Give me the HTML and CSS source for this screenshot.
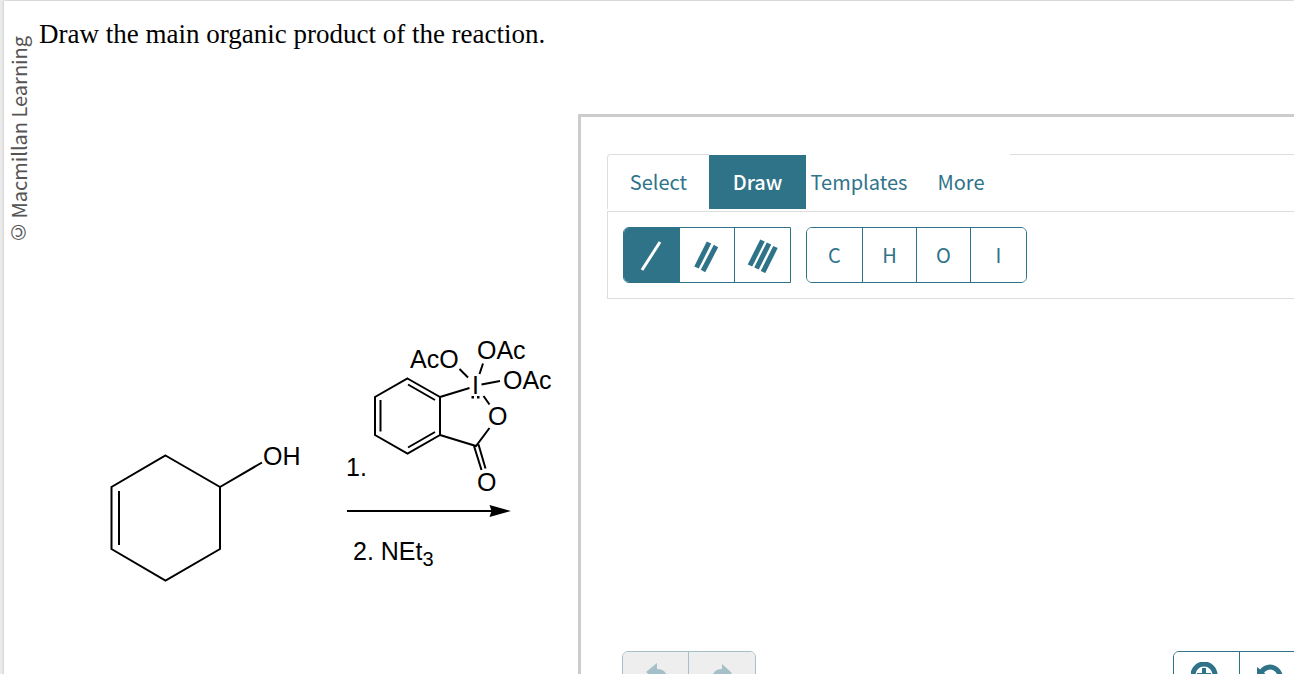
FILE: index.html
```html
<!DOCTYPE html>
<html lang="en">
<head>
<meta charset="utf-8">
<title>Draw the main organic product</title>
<link rel="stylesheet" href="styles.css">
</head>
<body>
<main class="page">
  <aside class="credit">© Macmillan Learning</aside>
  <div class="content">
    <p class="question">Draw the main organic product of the reaction.</p>
    <div class="workspace">
      <figure class="scheme">
        <svg class="reaction" width="480" height="260" viewBox="90 330 480 260" role="img" aria-label="Reaction scheme">
          <g class="bonds">
            <path d="M165.500 455.500 220 487V549L165.500 580.500 111.500 549V487ZM119 491V545M220 487 262 462.500"/>
            <path d="M407.500 378.500 440 397V435L407.500 453.500 375 435V397ZM380.500 400V431.500M408 384.500 435 400M408 447.500 435 432"/>
            <path d="M440 397 469.500 388M440 435 476 446 489.500 428M483.500 396 489.500 404.500M474 446 481.500 470M478.500 444.500 485.500 468.500M459.500 369 468 377.500M483 363.500 479.500 374M481.500 384.500 500 381"/>
            <path d="M347 511H493"/>
          </g>
          <path d="M489.500 505 511 511 489.500 517 491.500 511Z"/>
          <path d="M471.500 396h2.500v2.500h-2.500zM477 396h2.500v2.500h-2.500z"/>
          <g class="atoms">
            <text x="263" y="465">OH</text>
            <text x="410" y="368">AcO</text>
            <text x="477" y="359">OAc</text>
            <text x="503" y="389">OAc</text>
            <text x="472" y="394">I</text>
            <text x="488" y="425">O</text>
            <text x="477" y="491">O</text>
            <text x="346" y="476">1.</text>
            <text x="353" y="560">2. NEt<tspan class="sub" dy="6">3</tspan></text>
          </g>
        </svg>
      </figure>
      <section class="editor" aria-label="Structure editor">
        <nav class="tabs">
          <button class="tab tab-first" type="button">Select</button>
          <button class="tab tab-active" type="button">Draw</button>
          <button class="tab tab-wide" type="button">Templates</button>
          <button class="tab tab-more" type="button">More</button>
          <span class="tabs-rest"></span>
        </nav>
        <div class="toolbar">
          <div class="group bonds-group">
            <button class="tool selected" type="button" aria-label="Single bond"><svg width="32" height="36"><path class="thin" d="M6 33 24 5"/></svg></button>
            <button class="tool" type="button" aria-label="Double bond"><svg width="32" height="36"><path class="thick" d="M5.500 30.500 18 5.500M12 34 25 9"/></svg></button>
            <button class="tool" type="button" aria-label="Triple bond"><svg width="32" height="36"><path class="thick" d="M3 28.500 15.500 3.500M9.500 31.500 22 6.500M16 35 28.500 10"/></svg></button>
          </div>
          <div class="group">
            <button class="tool" type="button">C</button>
            <button class="tool" type="button">H</button>
            <button class="tool" type="button">O</button>
            <button class="tool" type="button">I</button>
          </div>
        </div>
        <div class="canvas"></div>
        <div class="actions">
          <div class="group action-group">
            <button class="tool" type="button" disabled aria-label="Undo"><svg width="28" height="28"><path d="M4 10 15 1V7C22 7 26 11 25 20 23 15 20 14 15 14V19Z"/></svg></button>
            <button class="tool" type="button" disabled aria-label="Redo"><svg width="28" height="28"><path d="M24 11 14 2V7C7 7 3 12 4 20 5 16 8 14 14 14V19Z"/></svg></button>
          </div>
          <div class="group action-group">
            <button class="tool" type="button" aria-label="Zoom in"><svg width="32" height="32"><circle class="ring" cx="13" cy="13" r="11"/><path class="plus" d="M13 6V20M6 13H20"/><path class="ring" d="M21 21 29 29"/></svg></button>
            <button class="tool" type="button" aria-label="Reset zoom"><svg width="32" height="32"><path d="M0 5 4 8 14 17H0Z"/><path class="ring" d="M4 11A10 10 0 1 1 7 23"/></svg></button>
            <button class="tool" type="button" aria-label="Zoom out"><svg width="32" height="32"><circle class="ring" cx="13" cy="13" r="11"/><path class="plus" d="M6 13H20"/><path class="ring" d="M21 21 29 29"/></svg></button>
          </div>
        </div>
      </section>
    </div>
  </div>
</main>
</body>
</html>
```
FILE: styles.css
```css
* { box-sizing: border-box; }
body {
  margin: 0;
  height: 100vh;
  overflow: hidden;
  background: #ebebeb;
  padding: 1px 0 0 4px;
  font-family: "Noto Sans CJK SC", "Open Sans", sans-serif;
}
.page {
  display: flex;
  min-height: 100%;
  background: #fff;
  box-shadow: 0 0 3px #bbb;
}
.credit {
  width: 30px;
  height: 242px;
  margin-right: 2px;
  writing-mode: vertical-rl;
  transform: rotate(180deg);
  font-size: 20px;
  line-height: 30px;
  color: #555;
}
.content { flex: 1; min-width: 0; padding-left: 3px; }
.question {
  margin: 0;
  padding-top: 17px;
  font: 27px/32px "Liberation Serif", serif;
  color: #000;
}
.workspace { display: flex; padding-top: 64px; }
.scheme { flex: none; width: 539px; margin: 0; padding: 216px 0 0 51px; }
.reaction { display: block; }
.bonds { fill: none; stroke: #000; stroke-width: 2; }
.atoms { font: 25px "Liberation Sans", sans-serif; }
.sub { font-size: 20px; }
.editor {
  flex: 1 0 auto;
  margin-right: -82px;
  border: 3px solid #ccc;
  padding: 37px 0 0 26px;
}
.tabs { display: flex; height: 57px; padding-bottom: 2px; }
.tab {
  padding: 0;
  border: 0;
  background: none;
  font: 20px/28px "Noto Sans CJK SC", sans-serif;
  color: #2f7389;
}
.tab-first {
  width: 102px;
  border: solid #ddd;
  border-width: 1px 0 0 1px;
  border-radius: 4px 0 0;
}
.tab-active {
  width: 97px;
  margin-top: 1px;
  background: #2f7389;
  color: #fff;
  font-weight: 500;
}
.tab-wide { width: 106px; }
.tab-more { width: 98px; }
.tabs-rest { flex: 1; border-top: 1px solid #ddd; }
.toolbar {
  display: flex;
  gap: 15px;
  padding: 15px;
  border: 1px solid #ddd;
}
.group {
  display: flex;
  border: 1px solid #2f7389;
  border-radius: 6px;
  overflow: hidden;
}
.bonds-group { border-radius: 6px 0 0 6px; }
.tool {
  display: flex;
  align-items: center;
  justify-content: center;
  width: 54px;
  height: 54px;
  padding: 0;
  border: 0;
  background: #fff;
  font: 20px/28px "Noto Sans CJK SC", sans-serif;
  color: #2f7389;
  fill: currentColor;
}
.tool + .tool { border-left: 1px solid #2f7389; }
.tool:first-child { width: 55px; }
.tool:last-child { width: 56px; }
.bonds-group .tool { width: 55px; }
.bonds-group .tool:last-child { width: 56px; }
.tool.selected { background: #2f7389; color: #fff; }
.thin { stroke: #fff; stroke-width: 3; }
.thick { stroke: #2f7389; stroke-width: 5; }
.canvas { height: 352px; }
.actions { display: flex; justify-content: space-between; padding-left: 15px; }
.action-group .tool {
  width: 66px;
  align-items: flex-start;
  padding-top: 10px;
}
.action-group .tool:first-child { width: 65px; }
.action-group .tool:last-child { width: 67px; }
.group .tool:disabled { background: #eee; color: #a5c0c8; border-color: #a5c0c8; }
.group:has(:disabled) { border-color: #a5c0c8; }
.ring { fill: none; stroke: #2f7389; stroke-width: 5; }
.plus { fill: none; stroke: #2f7389; stroke-width: 4; }
```
